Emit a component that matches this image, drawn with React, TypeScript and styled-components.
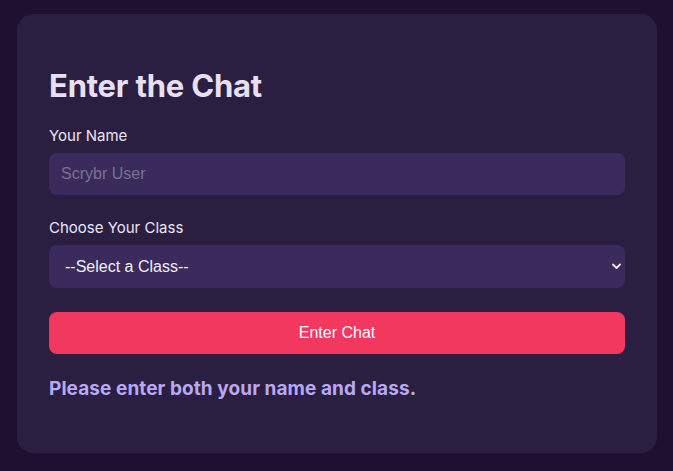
import React from "react";
import styled, { createGlobalStyle } from "styled-components";

const Global = createGlobalStyle`
  html, body { margin: 0; padding: 0; background: #1e1030; }
  body { font-family: Inter, "Noto Sans", sans-serif; }
  * { box-sizing: border-box; }
`;

const Page = styled.div`
  min-height: 471px;
  padding: 14px 16px 19px 17px;
  background: #1e1030;
`;

const Card = styled.form`
  background: #2a1f40;
  border-radius: 16px;
  padding: 54px 32px 53px;
  display: flex;
  flex-direction: column;
`;

const Title = styled.h2`
  margin: 0 0 23px;
  font-family: Inter, sans-serif;
  font-size: 31px;
  line-height: 36px;
  font-weight: 700;
  color: #e8e0f2;
  letter-spacing: -0.2px;
`;

const Field = styled.div`
  display: flex;
  flex-direction: column;
  gap: 8px;
  margin-bottom: 24px;
`;

const Label = styled.label`
  font-family: Inter, sans-serif;
  font-size: 15px;
  line-height: 18px;
  color: #ece4f6;
`;

const controlBase = `
  width: 100%;
  border: none;
  outline: none;
  border-radius: 8px;
  background: #3b2b5d;
  font-family: "Liberation Sans", Arial, sans-serif;
  font-size: 16px;
  color: #f2eefa;
`;

const TextInput = styled.input`
  ${controlBase}
  height: 42px;
  padding: 0 12px;
  &::placeholder { color: #7a7290; }
`;

const SelectWrap = styled.div`
  position: relative;
`;

const Select = styled.select`
  ${controlBase}
  height: 43px;
  padding: 0 12px 0 16px;
  appearance: none;
  -webkit-appearance: none;
`;

const Chevron = styled.svg`
  position: absolute;
  right: 4px;
  top: 18px;
  width: 9px;
  height: 7px;
  pointer-events: none;
`;

const Button = styled.button`
  ${controlBase}
  height: 42px;
  background: #f2385f;
  color: #ffffff;
  cursor: pointer;
  margin-bottom: 24px;
`;

const Message = styled.p`
  margin: 0;
  font-family: Inter, sans-serif;
  font-size: 19px;
  line-height: 22px;
  font-weight: 700;
  letter-spacing: 0.08px;
  color: #b9a8f2;
`;

export default function App() {
  return (
    <>
      <Global />
      <Page>
        <Card onSubmit={(e) => e.preventDefault()}>
          <Title>Enter the Chat</Title>
          <Field>
            <Label htmlFor="name">Your Name</Label>
            <TextInput id="name" placeholder="Scrybr User" />
          </Field>
          <Field>
            <Label htmlFor="cls">Choose Your Class</Label>
            <SelectWrap>
              <Select id="cls" defaultValue="">
                <option value="">--Select a Class--</option>
                <option value="warrior">Warrior</option>
                <option value="mage">Mage</option>
                <option value="rogue">Rogue</option>
              </Select>
              <Chevron viewBox="0 0 9 7">
                <path d="M1 1.5 L4.5 5 L8 1.5" fill="none" stroke="#f2eefa" strokeWidth="1.8" strokeLinecap="round" strokeLinejoin="round" />
              </Chevron>
            </SelectWrap>
          </Field>
          <Button type="submit">Enter Chat</Button>
          <Message>Please enter both your name and class.</Message>
        </Card>
      </Page>
    </>
  );
}
